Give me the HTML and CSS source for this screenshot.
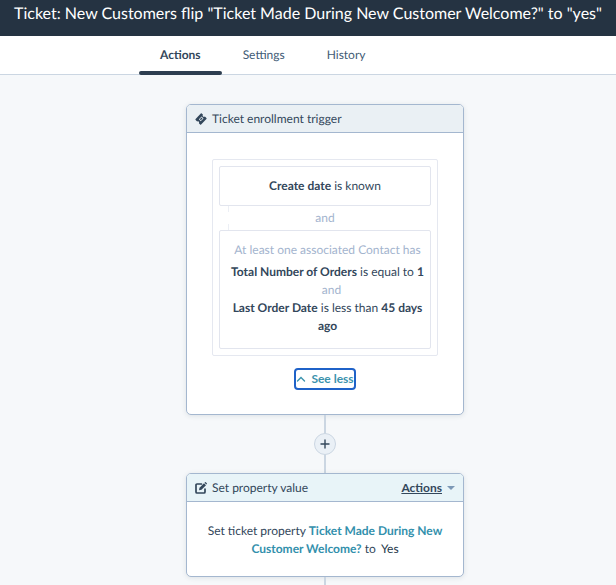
FILE: index.html
```html
<!DOCTYPE html>
<html lang="en">
<head>
  <meta charset="UTF-8" />
  <meta name="viewport" content="width=device-width, initial-scale=1.0"/>
  <title>Workflow actions</title>
  <link rel="stylesheet" href="styles.css">
</head>
<body>
  <header class="topbar">
    <h1>Ticket: New Customers flip "Ticket Made During New Customer Welcome?" to "yes"</h1>
  </header>

  <nav class="tabs">
    <a class="tab active" href="#actions">Actions</a>
    <a class="tab" href="#settings">Settings</a>
    <a class="tab" href="#history">History</a>
  </nav>

  <main class="canvas">
    <section class="card trigger">
      <div class="card-header">
        <svg class="icon" viewBox="0 0 12 12"><path fill="#33475b" fill-rule="evenodd" d="M6.800.500 8 1.700a1.300 1.300 0 0 0 1.900 1.800l1.500 1.400q.5.5 0 1L6.100 11.400q-.5.5-1 0L3.900 10.200A1.300 1.300 0 0 0 2.100 8.400L.6 7q-.5-.5 0-1L5.800.5q.5-.5 1 0zM6.600 3.500 3.900 6.200 5.700 8.200 8.500 5.500z"/><path fill="#33475b" d="M6.500 4.500 7.500 5.500 5.800 7.200 4.900 6.200z"/></svg>
        <h2>Ticket enrollment trigger</h2>
      </div>
      <div class="card-body">
        <div class="filters">
          <div class="filter"><p><b>Create date</b> is known</p></div>
          <div class="joiner">and</div>
          <div class="filter nested">
            <p class="muted first">At least one associated Contact has</p>
            <p><b>Total Number of Orders</b> is equal to <b>1</b></p>
            <p class="muted between">and</p>
            <p><b>Last Order Date</b> is less than <b>45 days ago</b></p>
          </div>
        </div>
        <button class="see-less" type="button">
          <svg viewBox="0 0 10 10"><path d="M1.500 7 5 3.500 8.500 7" fill="none" stroke="currentColor" stroke-width="1.400" stroke-linecap="round"/></svg>
          <span>See less</span>
        </button>
      </div>
    </section>

    <div class="connector">
      <button class="add" type="button" aria-label="Add action">
        <svg viewBox="0 0 10 10"><path d="M5 1v8M1 5h8" stroke="#33475b" stroke-width="1.400" stroke-linecap="round"/></svg>
      </button>
    </div>

    <section class="card action">
      <div class="card-header">
        <svg class="icon" viewBox="0 0 12 12"><path d="M6.500 2H2q-1 0-1 1v7q0 1 1 1h7q1 0 1-1V7" fill="none" stroke="#33475b" stroke-width="1.700" stroke-linecap="round"/><path d="M4 8.300 4.500 5.700 9 1.200 11 3.200 6.500 7.700z" fill="#33475b"/><path d="m9.500.7.500-.5q.4-.3.8 0L11.800 1.200q.4.400 0 .8l-.5.500z" fill="#33475b"/></svg>
        <h2>Set property value</h2>
        <button class="menu" type="button"><span>Actions</span><i class="caret"></i></button>
      </div>
      <div class="card-body">
        <p>Set ticket property <a href="#property">Ticket Made During New Customer Welcome?</a> to <span class="value">Yes</span></p>
      </div>
    </section>
    <div class="connector tail"></div>
  </main>
</body>
</html>
```
FILE: styles.css
```css
* {
  box-sizing: border-box;
}
body {
  margin: 0;
  min-height: 100vh;
  display: flex;
  flex-direction: column;
  font-family: Lato, "Liberation Sans", sans-serif;
  font-size: 12px;
  line-height: 18px;
  text-rendering: geometricPrecision;
  color: #33475b;
  background: #f6f8fa;
}
h1, h2, p {
  margin: 0;
  font-weight: 400;
}
h2 {
  font-size: 12px;
}
button {
  font: inherit;
  color: inherit;
  padding: 0;
  cursor: pointer;
}
.topbar {
  background: #253342;
  color: #fff;
  height: 36px;
  padding: 4px 5px;
}
.topbar h1 {
  font-size: 16px;
  line-height: 20px;
  text-align: center;
  white-space: nowrap;
}
.tabs {
  display: flex;
  height: 39px;
  padding-left: 139px;
  background: #fff;
  border-bottom: 1px solid #cbd6e2;
}
.tab {
  position: relative;
  padding: 10px 21px;
  color: #425b76;
  text-decoration: none;
}
.tab.active {
  font-weight: 700;
  color: #33475b;
}
.tab.active::after {
  content: "";
  position: absolute;
  left: 0;
  right: 0;
  bottom: -1px;
  height: 4px;
  border-radius: 2px;
  background: #2d3e50;
}
.canvas {
  flex: 1;
  display: flex;
  flex-direction: column;
  align-items: center;
  padding: 29px 0 0 34px;
}
.card {
  width: 278px;
  background: #fff;
  border: 1px solid #a4b7cf;
  border-radius: 5px;
  box-shadow: 0 1px 5px rgba(45, 62, 80, 0.12);
}
.card-header {
  display: flex;
  align-items: center;
  height: 28px;
  padding: 0 8px;
  border-bottom: 1px solid #a4b7cf;
  border-radius: 4px 4px 0 0;
  background: #eaf0f4;
}
.action .card-header {
  background: #e8f4f8;
}
.icon {
  width: 12px;
  height: 12px;
  margin-right: 5px;
}
.card-body {
  padding: 26px 25px 24px;
  text-align: center;
}
.filters {
  padding: 6px;
  border: 1px solid #e5e8f0;
  border-radius: 2px;
}
.filter {
  padding: 10px 14px;
  border: 1px solid #e2e5ee;
  border-radius: 2px;
}
.nested {
  padding: 10px 4px 13px 9px;
}
.first {
  margin-bottom: 4px;
}
.muted,
.joiner {
  color: #a3b4ce;
}
.between {
  padding-left: 8px;
}
.joiner {
  padding: 3px 0;
  background: linear-gradient(#eceff5 6px, transparent 6px, transparent 18px, #eceff5 18px) 9px 0 / 1px 100% no-repeat;
}
.see-less {
  display: inline-flex;
  align-items: center;
  gap: 5px;
  height: 22px;
  margin-top: 12px;
  border: 2px solid #1f62c8;
  border-radius: 4px;
  background: #fff;
  color: #3c93ad;
  font-weight: 700;
}
.see-less svg {
  width: 10px;
  height: 10px;
}
.connector {
  display: flex;
  align-items: center;
  justify-content: center;
  width: 22px;
  height: 58px;
  background: linear-gradient(#cbd6e2, #cbd6e2) center / 2px 100% no-repeat;
}
.tail {
  flex: 1;
  height: auto;
  min-height: 8px;
}
.add {
  display: flex;
  align-items: center;
  justify-content: center;
  width: 22px;
  height: 22px;
  border: 1px solid #cbd6e2;
  border-radius: 50%;
  background: #eaf0f6;
}
.add svg {
  width: 10px;
  height: 10px;
}
.menu {
  display: flex;
  align-items: center;
  gap: 5px;
  margin-left: auto;
  border: 0;
  background: none;
  font-weight: 700;
  text-decoration: underline;
}
.caret {
  border: 4px solid transparent;
  border-top-color: #7c98b6;
  border-bottom: 0;
}
.action .card-body {
  padding: 20px 20px 18px;
}
.action a {
  color: #3390ac;
  font-weight: 700;
  text-decoration: none;
}
.value {
  color: #26384a;
  margin-left: 2px;
}
```
